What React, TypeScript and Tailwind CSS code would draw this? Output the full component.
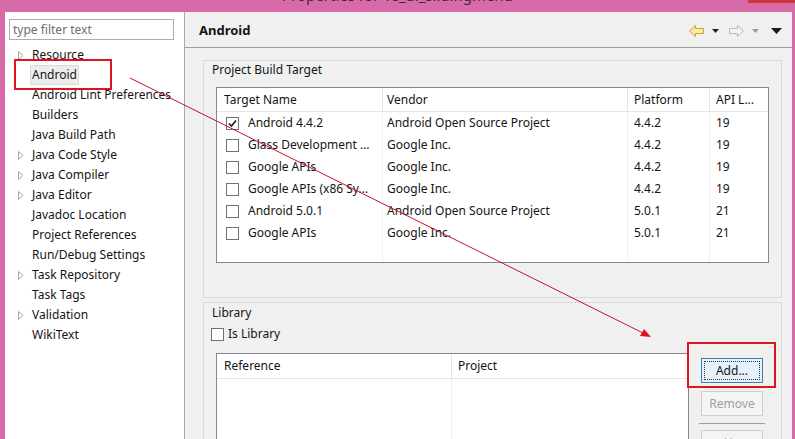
import React from 'react'

const treeItems: { label: string; expandable?: boolean; selected?: boolean }[] = [
  { label: 'Resource', expandable: true },
  { label: 'Android', selected: true },
  { label: 'Android Lint Preferences' },
  { label: 'Builders' },
  { label: 'Java Build Path' },
  { label: 'Java Code Style', expandable: true },
  { label: 'Java Compiler', expandable: true },
  { label: 'Java Editor', expandable: true },
  { label: 'Javadoc Location' },
  { label: 'Project References' },
  { label: 'Run/Debug Settings' },
  { label: 'Task Repository', expandable: true },
  { label: 'Task Tags' },
  { label: 'Validation', expandable: true },
  { label: 'WikiText' },
]

const targets = [
  { name: 'Android 4.4.2', vendor: 'Android Open Source Project', platform: '4.4.2', api: '19', checked: true },
  { name: 'Glass Development ...', vendor: 'Google Inc.', platform: '4.4.2', api: '19' },
  { name: 'Google APIs', vendor: 'Google Inc.', platform: '4.4.2', api: '19' },
  { name: 'Google APIs (x86 Sy...', vendor: 'Google Inc.', platform: '4.4.2', api: '19' },
  { name: 'Android 5.0.1', vendor: 'Android Open Source Project', platform: '5.0.1', api: '21' },
  { name: 'Google APIs', vendor: 'Google Inc.', platform: '5.0.1', api: '21' },
]

function Checkbox({ checked }: { checked?: boolean }) {
  return (
    <span className="w-[13px] h-[13px] shrink-0 border border-[#707070] bg-white flex items-center justify-center">
      {checked && (
        <svg width="9" height="9" viewBox="0 0 9 9">
          <path d="M1 4.5 L3.5 7 L8 1.5" stroke="#1a1a1a" strokeWidth="1.6" fill="none" />
        </svg>
      )}
    </span>
  )
}

function Expander() {
  return (
    <svg width="6" height="9" viewBox="0 0 6 9" className="shrink-0">
      <path d="M0.5 0.5 L5 4.5 L0.5 8.5 Z" fill="white" stroke="#a6a6a6" />
    </svg>
  )
}

function NavArrow({ dir, active }: { dir: 'left' | 'right'; active?: boolean }) {
  const d =
    dir === 'left'
      ? 'M0.5 6 L6.5 0.5 L6.5 3.5 L14.5 3.5 L14.5 8.5 L6.5 8.5 L6.5 11.5 Z'
      : 'M14.5 6 L8.5 0.5 L8.5 3.5 L0.5 3.5 L0.5 8.5 L8.5 8.5 L8.5 11.5 Z'
  return (
    <svg width="15" height="12" viewBox="0 0 15 12">
      <path d={d} fill={active ? '#fde9a6' : '#f4f4f4'} stroke={active ? '#d4a139' : '#b9b9b9'} />
    </svg>
  )
}

function DropTri({ color, size = 5 }: { color: string; size?: number }) {
  return (
    <svg width={size * 2 - 1} height={size} viewBox={`0 0 ${size * 2 - 1} ${size}`}>
      <path d={`M0 0 L${size * 2 - 1} 0 L${size - 0.5} ${size} Z`} fill={color} />
    </svg>
  )
}

export default function App() {
  return (
    <div
      className="relative w-[795px] h-[439px] overflow-hidden bg-[#d86ba7] flex flex-col text-[12px] text-[#141414]"
      style={{ fontFamily: '"Noto Sans", "Liberation Sans", sans-serif' }}
    >
      {/* title bar */}
      <div className="h-[12px] flex shrink-0">
        <div className="w-[47px]" />
        <div className="flex-1 flex justify-center overflow-hidden">
          <span className="text-[15px] leading-[15px] -mt-[12px] text-[#3a2a33]">Properties for Te_ui_slidingmenu</span>
        </div>
        <div className="w-[47px] h-[3px] bg-[#c8383c]" />
      </div>

      <div className="flex-1 flex pl-[5px] pr-[3px] min-h-0">
        {/* left tree */}
        <div className="w-[180px] bg-white border-r border-[#a8a8a8] flex flex-col pt-[7px]">
          <div className="ml-[4px] mr-[10px] h-[21px] border border-[#abadb3] flex items-center pl-[3px] text-[#6d6d6d]">
            type filter text
          </div>
          <div className="mt-[5px] flex flex-col">
            {treeItems.map((it) => (
              <div key={it.label} className="h-[20px] flex items-center">
                <div className="w-[27px] flex justify-end pr-[8px]">{it.expandable && <Expander />}</div>
                <span
                  className={
                    it.selected
                      ? 'px-[1px] h-[20px] flex items-center bg-[#ededed] border border-[#dadada] -ml-[2px]'
                      : 'whitespace-nowrap'
                  }
                >
                  {it.label}
                </span>
              </div>
            ))}
          </div>
        </div>

        {/* right pane */}
        <div className="flex-1 bg-[#f0f0f0] flex flex-col min-w-0">
          <div className="h-[36px] shrink-0 border-b border-[#a0a0a0] flex items-center pl-[14px] pr-[10px] pt-[2px]">
            <span className="font-bold text-[13px]">Android</span>
            <div className="ml-auto flex items-center gap-[8px]">
              <NavArrow dir="left" active />
              <DropTri color="#222" size={4} />
              <span className="ml-[2px]"><NavArrow dir="right" /></span>
              <DropTri color="#9a9a9a" size={4} />
              <span className="ml-[4px]"><DropTri color="#1a1a1a" size={6} /></span>
            </div>
          </div>

          {/* Project Build Target group */}
          <div className="mt-[12px] ml-[18px] mr-[10px] h-[238px] border border-[#dadada] shrink-0 flex flex-col">
            <div className="pl-[8px] h-[16px] leading-[16px] mt-[1px]">Project Build Target</div>
            <div className="mt-[9px] mx-[12px] h-[176px] border border-[#828790] bg-white flex flex-col">
              <div className="h-[24px] grid grid-cols-[166px_245px_82px_1fr] border-b border-[#e5e5e5] shrink-0">
                <div className="pl-[7px] flex items-center border-r border-[#e5e5e5]">Target Name</div>
                <div className="pl-[4px] flex items-center border-r border-[#e5e5e5]">Vendor</div>
                <div className="pl-[6px] flex items-center border-r border-[#e5e5e5]">Platform</div>
                <div className="pl-[6px] flex items-center">API L...</div>
              </div>
              <div className="flex-1 grid grid-cols-[166px_245px_82px_1fr]">
                <div className="flex flex-col border-r border-[#f0f0f0]">
                  {targets.map((t, i) => (
                    <div key={i} className="h-[22px] flex items-center pl-[9px] gap-[9px] whitespace-nowrap">
                      <Checkbox checked={t.checked} />
                      <span>{t.name}</span>
                    </div>
                  ))}
                </div>
                <div className="flex flex-col border-r border-[#f0f0f0]">
                  {targets.map((t, i) => (
                    <div key={i} className="h-[22px] flex items-center pl-[4px] whitespace-nowrap">{t.vendor}</div>
                  ))}
                </div>
                <div className="flex flex-col border-r border-[#f0f0f0]">
                  {targets.map((t, i) => (
                    <div key={i} className="h-[22px] flex items-center pl-[6px]">{t.platform}</div>
                  ))}
                </div>
                <div className="flex flex-col">
                  {targets.map((t, i) => (
                    <div key={i} className="h-[22px] flex items-center pl-[6px]">{t.api}</div>
                  ))}
                </div>
              </div>
            </div>
          </div>

          {/* Library group */}
          <div className="mt-[4px] ml-[18px] mr-[10px] flex-1 border border-[#dadada] border-b-0 flex flex-col min-h-0">
            <div className="pl-[8px] h-[16px] leading-[16px] mt-[2px]">Library</div>
            <div className="mt-[5px] pl-[7px] h-[16px] flex items-center gap-[4px]">
              <Checkbox />
              <span>Is Library</span>
            </div>
            <div className="mt-[11px] flex flex-1 min-h-0">
              <div className="ml-[12px] w-[473px] border border-[#828790] border-b-0 bg-white flex flex-col">
                <div className="h-[25px] grid grid-cols-[235px_1fr] border-b border-[#e5e5e5]">
                  <div className="pl-[7px] flex items-center border-r border-[#e5e5e5]">Reference</div>
                  <div className="pl-[6px] flex items-center">Project</div>
                </div>
                <div className="flex-1 grid grid-cols-[235px_1fr]">
                  <div className="border-r border-[#f0f0f0]" />
                  <div />
                </div>
              </div>
              <div className="ml-[12px] w-[62px] flex flex-col pt-[5px]">
                <div className="h-[25px] shrink-0 border border-[#3c7fb1] bg-[#e5f1fb] p-[2px]">
                  <div className="h-full border border-dotted border-[#333] flex items-center justify-center">Add...</div>
                </div>
                <div className="mt-[8px] h-[25px] shrink-0 border border-[#cfcfcf] bg-[#f4f4f4] flex items-center justify-center text-[#a0a0a0]">
                  Remove
                </div>
                <div className="mt-[7px] h-px shrink-0 bg-[#a0a0a0] -mx-[2px]" />
                <div className="mt-[6px] h-[26px] shrink-0 border border-[#cfcfcf] bg-[#f4f4f4] flex items-center justify-center text-[#a0a0a0]">
                  Up
                </div>
              </div>
            </div>
          </div>
        </div>
      </div>

      {/* annotation overlay */}
      <div className="absolute left-[14px] top-[59px] w-[98px] h-[31px] border-2 border-[#e0141e] pointer-events-none" />
      <div className="absolute left-[687px] top-[342px] w-[89px] h-[46px] border-2 border-[#e0141e] pointer-events-none" />
      <svg className="absolute inset-0 pointer-events-none" width="795" height="439">
        <line x1="130" y1="78" x2="645" y2="334" stroke="#c8102e" strokeWidth="1" />
        <polygon points="651,337 640,336 644,329" fill="#e0141e" />
      </svg>
    </div>
  )
}
